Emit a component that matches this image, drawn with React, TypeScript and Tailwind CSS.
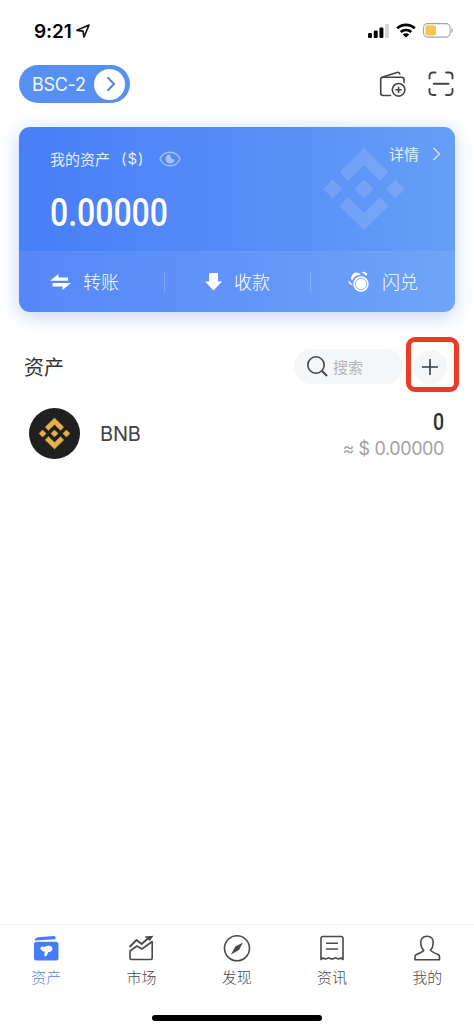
import type { ReactNode } from "react";

function BinanceMark({ className }: { className?: string }) {
  return (
    <svg viewBox="0 0 82 82" className={className} fill="currentColor" stroke="currentColor">
      <path d="M41 0 65.5 24 57 33 41 17 25 33 16.500 24Z" />
      <path d="M41 82 65.500 58 57 49 41 65 25 49 16.500 58Z" />
      <path d="M41 31.500 50.500 41 41 50.500 31.500 41Z" />
      <path d="M9.500 31.500 19 41 9.500 50.500 0 41Z" />
      <path d="M72.500 31.500 82 41 72.500 50.500 63 41Z" />
    </svg>
  );
}

function StatusBar() {
  return (
    <header className="flex h-[60px] items-start justify-between pr-5 pl-[34px] pt-[19px]">
      <div className="flex items-center pt-px">
        <span className="font-[Inter] text-[19px] leading-[24px] font-semibold tracking-[-0.1px] text-black">9:21</span>
        <svg width="14" height="14" viewBox="0 0 14 14" className="mb-[2px] ml-[4px]" fill="none" stroke="#111" strokeWidth="1.7" strokeLinejoin="round">
          <path d="M13 1 1 6.300 7 7.200 8 13Z" />
        </svg>
      </div>
      <div className="flex items-center pt-1">
        <svg width="21" height="14" viewBox="0 0 21 14">
          <rect x="0" y="9" width="4" height="5" rx="1.200" />
          <rect x="5.700" y="6.500" width="4" height="7.500" rx="1.200" />
          <rect x="11.400" y="3.500" width="4" height="10.500" rx="1.200" />
          <rect x="17" y="0" width="4" height="14" rx="1.200" fill="#d4d4d4" />
        </svg>
        <svg width="20" height="15" viewBox="0 0 20 15" className="ml-[7px]" fill="none" stroke="#000" strokeWidth="2.700">
          <path d="M1.200 5.300C6 .6 14 .6 18.800 5.300" />
          <path d="M4.700 9C7.700 6.300 12.300 6.300 15.300 9" />
          <path d="M10 14.500 6.800 11.500C8.500 9.900 11.500 9.900 13.200 11.500Z" fill="#000" stroke="none" />
        </svg>
        <svg width="31" height="15" viewBox="0 0 31 15" className="ml-[7px]">
          <rect x=".6" y=".6" width="26.500" height="13.500" rx="4" fill="#fff" stroke="#a3a3a3" strokeWidth="1.100" />
          <rect x="2.500" y="2.300" width="10.500" height="10.200" rx="2" fill="#f3c74f" />
          <path d="M28.500 5V10C30.300 9.500 30.300 5.500 28.500 5Z" fill="#a3a3a3" />
        </svg>
      </div>
    </header>
  );
}

function ChainHeader() {
  return (
    <div className="flex h-[67px] items-start justify-between pt-[5px] pr-5 pl-[19px]">
      <button className="flex h-[38px] w-[111px] items-center justify-between rounded-full bg-[#5690f3] pr-[5px] pl-[13px]">
        <span className="pt-px font-[Inter] text-[18px] leading-none tracking-[-0.3px] whitespace-nowrap text-[#f0f6ff]">BSC-2</span>
        <span className="flex size-[31px] items-center justify-center rounded-full bg-white">
          <svg width="10" height="16" viewBox="0 0 10 16" className="ml-[3px]" fill="none" stroke="#5585cf" strokeWidth="2">
            <path d="M1.500 1.200 8 8 1.500 14.800" />
          </svg>
        </span>
      </button>
      <div className="flex gap-[22px] pt-[6px]">
        <svg width="27" height="26" viewBox="0 0 27 26" fill="none" stroke="#414346" strokeWidth="1.600" strokeLinecap="round" strokeLinejoin="round">
          <path d="M11.500 24.500H4Q1.700 24.500 1.700 22V8.500Q1.700 6.200 4 6.200H22.500Q25 6.200 25 8.500V11.500" />
          <path d="M3 6.200 18 1.400Q20 .8 20.800 3" />
          <circle cx="19.600" cy="18.800" r="6.300" />
          <path d="M19.600 16.200V21.400M17 18.800H22.200" />
        </svg>
        <svg width="26" height="26" viewBox="0 0 26 26" fill="none" stroke="#414346" strokeWidth="1.900" strokeLinecap="round">
          <path d="M1.500 7.500V5Q1.500 1.500 5 1.500H7.500M18 1.500H21Q24.500 1.500 24.500 5V7.500M24.500 18V20.500Q24.500 24 21 24H18M7.500 24H5Q1.500 24 1.500 20.500V18" />
          <path d="M5.800 12.700H20.500" />
        </svg>
      </div>
    </div>
  );
}

function AssetCard() {
  return (
    <section className="relative mx-[19px] flex h-[185px] flex-col overflow-hidden rounded-[11px] bg-linear-to-r from-[#487ef7] via-[#568cf7] via-50% to-[#669ef6] text-[#e5efff]">
      <BinanceMark className="absolute top-[21px] left-[304px] size-[82px] fill-white stroke-none opacity-12" />
      <div className="flex h-[124px] flex-col pl-[31px]">
        <div className="flex items-start justify-between pt-[16px] pr-[14px]">
          <div className="flex h-[30px] items-center">
            <span className="text-[15px] leading-none whitespace-nowrap">我的资产</span>
            <span className="ml-[11px] pt-px font-[Inter] text-[15px] leading-none tracking-[1px]">($)</span>
            <svg width="22" height="16" viewBox="0 0 22 16" className="ml-[14px] mt-px opacity-60" fill="none" stroke="#dce9ff" strokeWidth="1.300">
              <path d="M1 8C5 -1 17 -1 21 8C17 17 5 17 1 8Z" />
              <path d="M11 3.500A4.500 4.500 0 1 0 15.500 8.500Q11.500 8.500 11 3.500Z" fill="#dce9ff" stroke="none" />
            </svg>
          </div>
          <div className="flex h-5 items-center">
            <span className="text-[15px] leading-none whitespace-nowrap">详情</span>
            <svg width="9" height="14" viewBox="0 0 9 14" className="mt-[2px] ml-[13px]" fill="none" stroke="#d3e2ff" strokeWidth="1.500">
              <path d="M1.500 1 7.500 7 1.500 13" />
            </svg>
          </div>
        </div>
        <strong className="mt-[20px] origin-left scale-x-[0.820] font-[Roboto] text-[39px] leading-[40px] font-medium text-white">0.00000</strong>
      </div>
      <div className="flex h-[61px] items-center bg-white/7 text-[18px] leading-none font-light text-white">
        <button className="flex w-[145px] items-center pl-[31px]">
          <svg width="21" height="16" viewBox="0 0 21 16" fill="#fff">
            <path d="M0 6.700 8.500 0V3.500H18V6.700ZM21 9 12.500 16V12.500H2.500V9Z" />
          </svg>
          <span className="ml-3 pb-px whitespace-nowrap">转账</span>
        </button>
        <i className="h-5 w-px bg-white/20" />
        <button className="flex w-[145px] items-center pl-[40px]">
          <svg width="17" height="18" viewBox="0 0 17 18" fill="#fff">
            <path d="M4 1Q4 0 5 0H12Q13 0 13 1V8.500H17L8.500 17.500 0 8.500H4Z" />
          </svg>
          <span className="ml-[12px] pb-px whitespace-nowrap">收款</span>
        </button>
        <i className="h-5 w-px bg-white/20" />
        <button className="flex flex-1 items-center pl-[37px]">
          <svg width="21" height="21" viewBox="0 0 21 21" fill="#fff">
            <path d="M3 8C3.500 1 9.500-.5 13 3.800C8.500 4 5.500 6 4.500 9.500Z" />
            <circle cx="13" cy="13" r="7.700" />
            <circle cx="13" cy="13" r="5.700" fill="none" stroke="#86adf7" strokeWidth=".9" />
            <path d="M13.500 1Q18-.2 19.500 4L17.500 4.500Q16 2 13.500 1ZM.8 9Q0 13 4.600 14.500L3.800 12.700Q2 12 .8 9Z" />
          </svg>
          <span className="ml-[13px] pb-px whitespace-nowrap">闪兑</span>
        </button>
      </div>
    </section>
  );
}

function AssetList() {
  return (
    <main className="flex-1">
      <div className="flex h-[65px] items-start justify-between pr-[15px] pl-6">
        <h1 className="pt-[20px] text-[20px] leading-[20px] font-normal text-[#303236]">资产</h1>
        <div className="flex items-start">
          <label className="mt-[12px] flex h-[35px] w-[109px] items-center rounded-full bg-[#f5f6f8] pl-[13px]">
            <svg width="21" height="21" viewBox="0 0 21 21" fill="none" stroke="#414348" strokeWidth="1.600">
              <circle cx="9" cy="9" r="8.200" />
              <path d="M15 15 20 20" strokeWidth="2" />
            </svg>
            <span className="ml-[5px] pb-px text-[15px] leading-none whitespace-nowrap text-[#b3b3b5]">搜索</span>
          </label>
          <button className="ml-[3px] flex h-[55px] w-[53px] items-center justify-center rounded-[9px] border-[5px] border-[#e93b27] bg-white pt-[4px] pr-[5px]">
            <span className="flex size-[34px] shrink-0 items-center justify-center rounded-full bg-[#f5f6f8]">
              <svg width="16" height="16" viewBox="0 0 16 16" fill="none" stroke="#393b40" strokeWidth="1.600">
                <path d="M8 0V16M0 8H16" />
              </svg>
            </span>
          </button>
        </div>
      </div>
      <div className="flex h-[62px] items-center pr-[30px] pl-[29px]">
        <span className="flex size-[51px] items-center justify-center rounded-full bg-[#202020]">
          <BinanceMark className="size-[31px] overflow-visible stroke-1 text-[#e5b047]" />
        </span>
        <span className="ml-[20px] pt-px font-[Inter] text-[20px] leading-none tracking-[-0.200px] text-[#414246]">BNB</span>
        <div className="ml-auto flex flex-col items-end pt-[6px]">
          <strong className="origin-right scale-x-[0.850] font-[Roboto] text-[23px] leading-[26px] font-medium text-[#2d2f34]">0</strong>
          <span className="font-[Inter] text-[18px] leading-[26px] tracking-[-0.4px] whitespace-nowrap text-[#a1a1a3]">≈ $ 0.00000</span>
        </div>
      </div>
    </main>
  );
}

function Tab({ label, active, children }: { label: string; active?: boolean; children: ReactNode }) {
  return (
    <button className={active ? "flex w-[95.300px] flex-col items-center text-[#4f8ae0]" : "flex w-[95.300px] flex-col items-center text-[#48494c]"}>
      <svg width="28" height="28" viewBox="0 0 28 28" fill="none" stroke="currentColor" strokeWidth="1.600" strokeLinejoin="round">
        {children}
      </svg>
      <span className="mt-[6px] text-[15px] leading-[17px] font-light whitespace-nowrap">{label}</span>
    </button>
  );
}

function TabBar() {
  return (
    <footer className="h-[104px] border-t border-[#efefef]">
      <nav className="-ml-[1.500px] flex w-[477px] pt-[9px]">
        <Tab label="资产" active>
          <path d="M2.500 6.200Q3 3.500 6 3.200L22 2Q24 2 23.500 5.200L3 6.500Z" fill="#467df5" stroke="none" />
          <rect x="2" y="7.700" width="24.500" height="18.800" rx="2.500" fill="#467df5" stroke="none" />
          <path d="M8.500 13.500Q10 12 12 13Q13.500 13 14.500 12Q20 11 20.500 14.500Q20 18.200 16 18.200L15.500 20Q14.800 23 12.800 22.300Q11.800 22 12.500 20L12.800 17.500Q10.500 18 9.500 16Q8 15 8.500 13.500Z" fill="#fff" stroke="none" />
        </Tab>
        <Tab label="市场">
          <path d="M2.500 13 9.500 6 14.500 10 22 3.800" strokeWidth="1.900" />
          <path d="M17.500 2.500 26.500 1.800 22.800 7Z" fill="currentColor" stroke="none" />
          <path d="M3 17 10 12 15 15 25.200 7.500V24Q25.200 25.500 23.700 25.500H4.500Q3 25.500 3 24Z" />
        </Tab>
        <Tab label="发现">
          <circle cx="14" cy="14.300" r="12.500" />
          <path d="M20 8.500 16 16 8 20.500 12.300 12.500Z" fill="currentColor" stroke="none" />
        </Tab>
        <Tab label="资讯">
          <path d="M3 25.500V4.500Q3 2.500 5 2.500H23Q25 2.500 25 4.500V25.500L22.800 23.800Q21 25.500 19 24.500L17.200 23.800Q14 26 10.800 23.800L9 24.500Q7 25.500 5.200 23.800Z" />
          <path d="M8 9.200H20M8 15H20" />
        </Tab>
        <Tab label="我的">
          <path d="M14 2.300C9.500 2.300 7.500 5.300 7.800 9C8 12.300 9 14.800 10.800 16.300Q10.500 17.500 3 20.800Q2 21.300 2 22.500V25.700H26.500V22.500Q26.500 21.300 25.500 20.800Q18 17.500 17.500 16.300C19 14.800 20 12.300 20.200 9C20.500 5.300 18.500 2.300 14 2.300Z" />
        </Tab>
      </nav>
      <div className="mx-auto mt-[30px] h-[6px] w-[170px] rounded-full bg-black" />
    </footer>
  );
}

export default function App() {
  return (
    <div className="flex h-[1028px] w-[474px] flex-col overflow-hidden bg-white font-['Noto_Sans_CJK_SC',sans-serif]">
      <StatusBar />
      <ChainHeader />
      <div className="mb-[25px]">
        <div className="mx-[19px] rounded-[11px] shadow-[0_4px_20px_rgba(75,130,235,0.35)]">
          <div className="-mx-[19px]">
            <AssetCard />
          </div>
        </div>
      </div>
      <AssetList />
      <TabBar />
    </div>
  );
}
